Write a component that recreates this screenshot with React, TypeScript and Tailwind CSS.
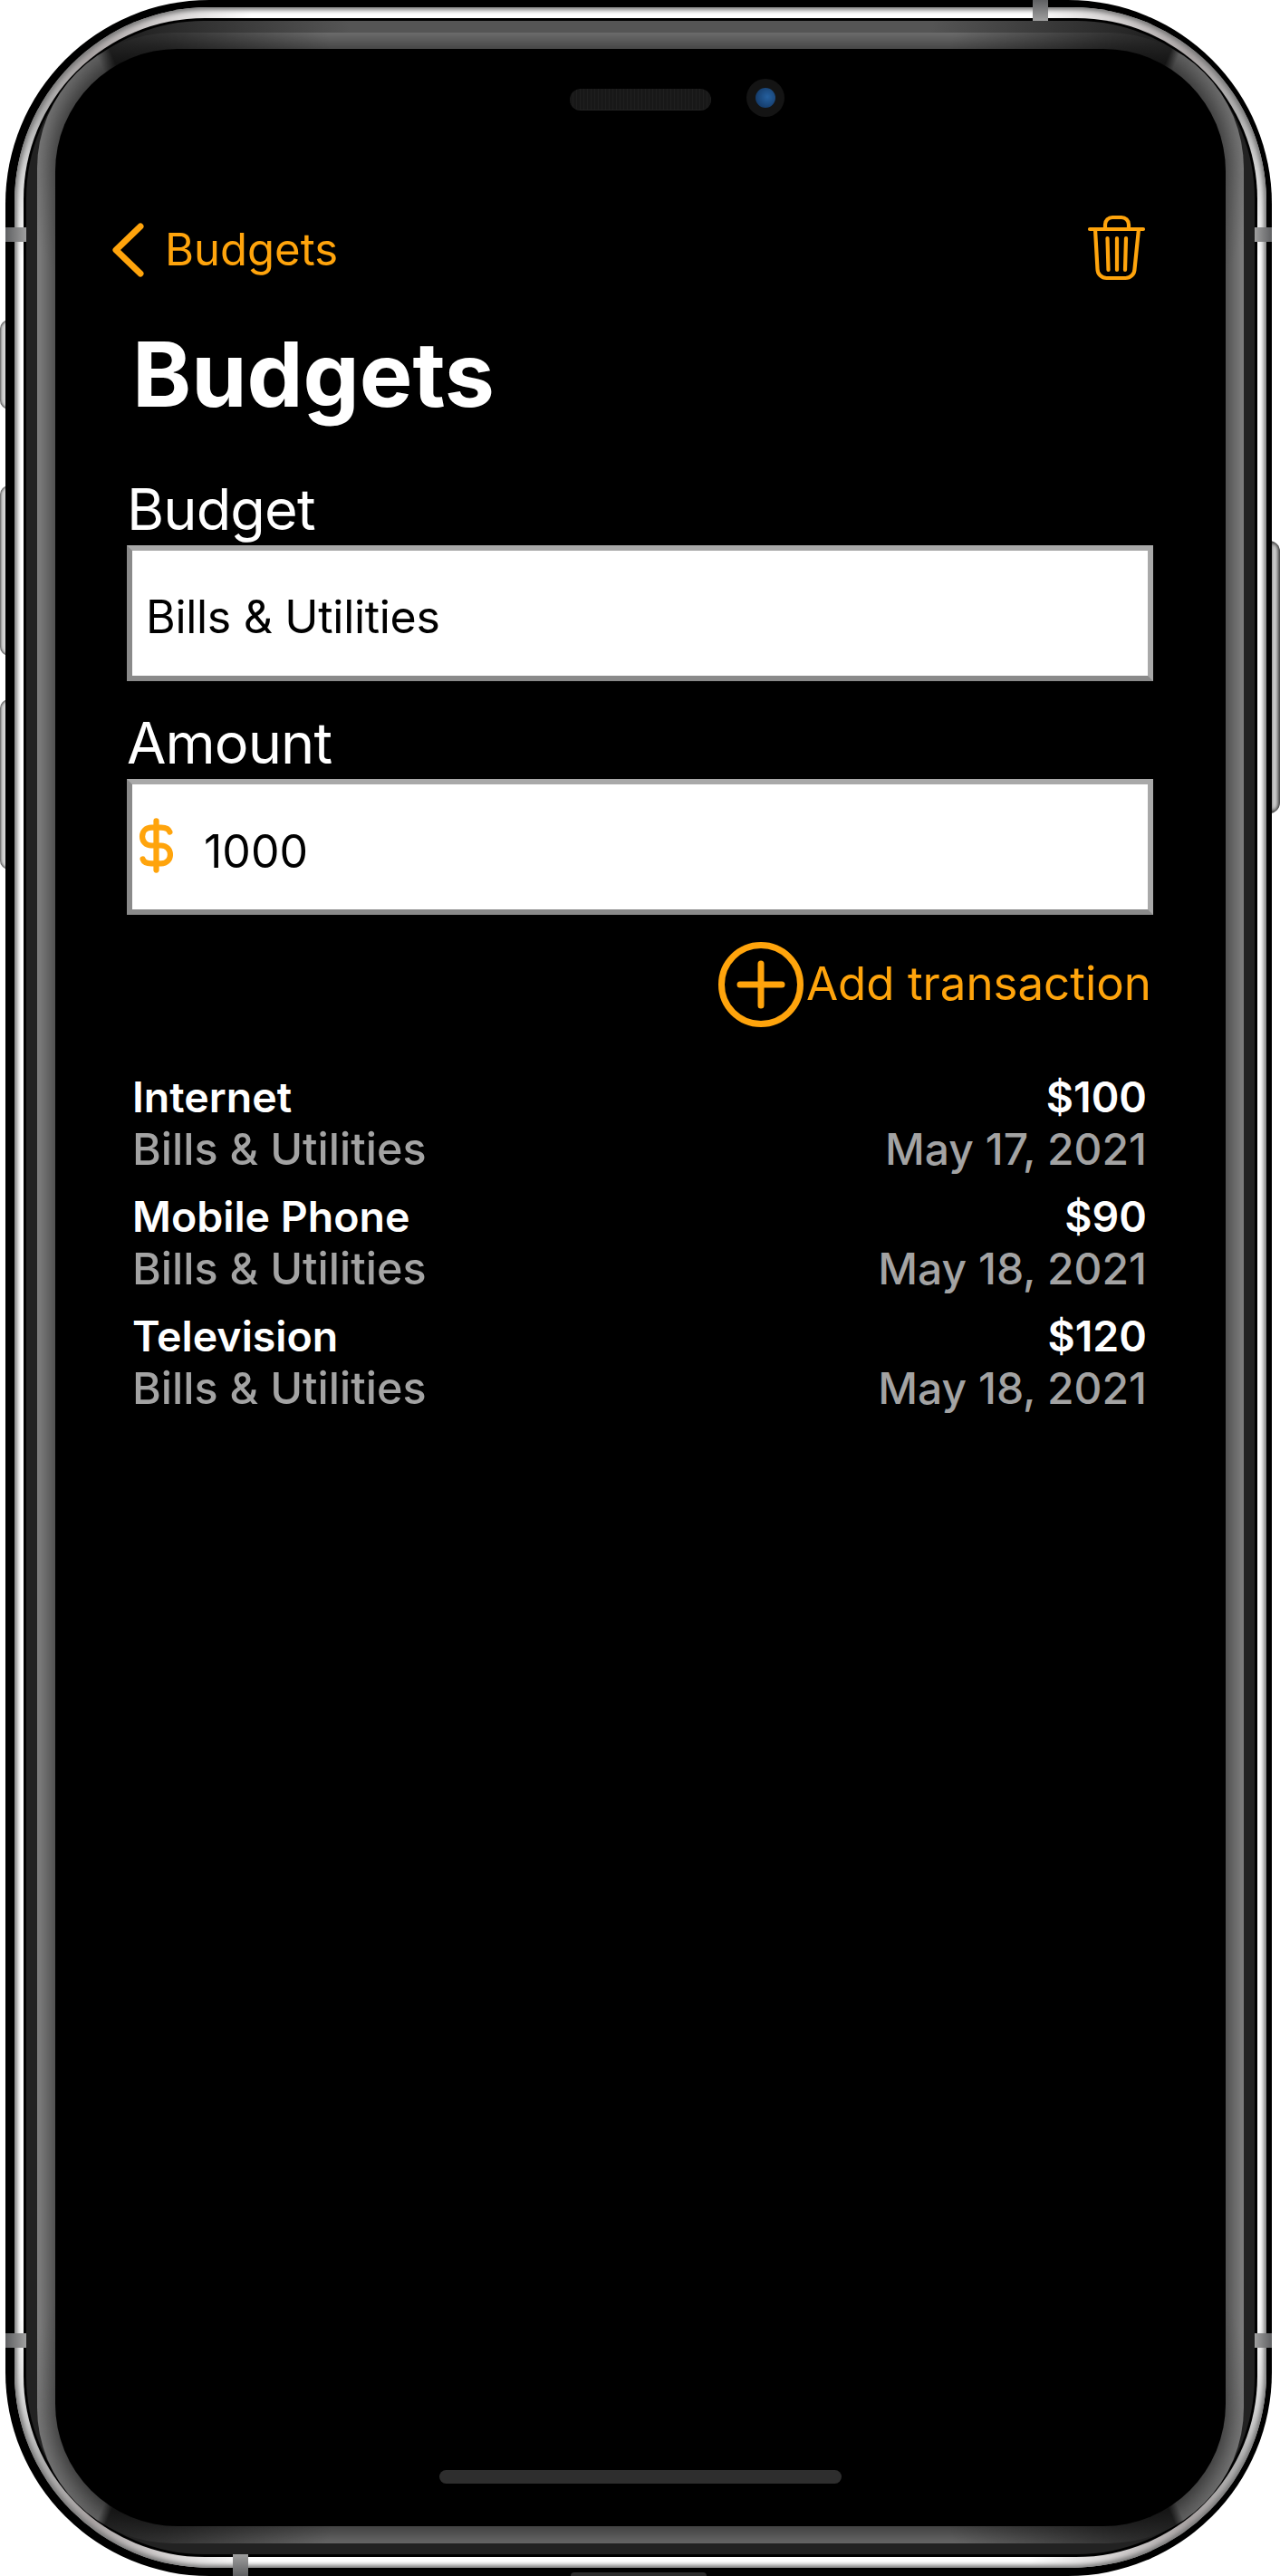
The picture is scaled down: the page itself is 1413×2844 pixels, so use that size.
const font = "font-['Inter','Liberation_Sans',sans-serif]";

function Chevron() {
  return (
    <svg width="38" height="60" viewBox="0 0 38 60" fill="none" stroke="#ffa40c" strokeWidth="7" strokeLinecap="round" strokeLinejoin="round">
      <path d="M33 4 L6 30 L33 56" />
    </svg>
  );
}

function Trash() {
  return (
    <svg width="65" height="74" viewBox="0 0 65 74" fill="none" stroke="#ffa40c" strokeWidth="4.2" strokeLinecap="round" strokeLinejoin="round">
      <path d="M3 16H62" />
      <path d="M20 16V11a8 8 0 0 1 8-8h10a8 8 0 0 1 8 8v5" />
      <path d="M9 16L11.5 60a10 10 0 0 0 10 10H42.5a10 10 0 0 0 10-10L57 16" />
      <path d="M22.5 26L23.5 61M33 26V61M43 26L42 61" />
    </svg>
  );
}

function Dollar() {
  return (
    <svg width="65" height="65" viewBox="0 0 24 24" fill="none" stroke="#ffa40c" strokeWidth="2.3" strokeLinecap="round" strokeLinejoin="round">
      <path d="M12 2V22" />
      <path d="M17.5 6.5C17 5 15.500 4.700 14 4.700H10C7.800 4.700 6.300 6.200 6.300 8.300C6.300 10.400 7.800 12 10 12H14C16.200 12 17.700 13.600 17.700 15.700C17.700 17.800 16.200 19.300 14 19.300H10C8.500 19.300 7 19 6.500 17.500" />
    </svg>
  );
}

function AddCircle() {
  return (
    <svg width="94" height="94" viewBox="0 0 94 94" fill="none" stroke="#ffa40c" strokeWidth="7" strokeLinecap="round">
      <circle cx="47" cy="47" r="43.500" />
      <path d="M24 47H70M47 24V70" />
    </svg>
  );
}

const rows = [
  { name: "Internet", amount: "$100", date: "May 17, 2021" },
  { name: "Mobile Phone", amount: "$90", date: "May 18, 2021" },
  { name: "Television", amount: "$120", date: "May 18, 2021" },
];

function Field({ label, children }: { label: string; children: React.ReactNode }) {
  return (
    <div className="flex flex-col gap-2">
      <div className="h-[64px] pl-[16px] text-[63px] leading-[64px] tracking-[-0.9px] text-white">{label}</div>
      <div className="ml-[16px] flex h-[150px] w-[1133px] items-center border-[6px] border-t-[#a9a9a9] border-r-[#a9a9a9] border-b-[#8a8a8a] border-l-[#8a8a8a] bg-white">
        {children}
      </div>
    </div>
  );
}

function Screen() {
  return (
    <div className={`relative h-full w-full rounded-[135px] bg-black pl-[63px] ${font} shadow-[0_0_24px_8px_rgba(0,0,0,0.55)]`}>
      <div className="absolute top-[44px] left-[568px] h-[24px] w-[156px] rounded-full border-b border-[#222] bg-[repeating-linear-gradient(90deg,#181818_0,#181818_3px,#1f1f1f_3px,#1f1f1f_4px)]" />
      <div className="absolute top-[33px] left-[763px] flex h-[42px] w-[42px] items-center justify-center rounded-full bg-[#141414]">
        <div className="h-[22px] w-[22px] rounded-full bg-[radial-gradient(circle_at_60%_45%,#25609f,#0f2f58)]" />
      </div>

      <div className="mt-0 w-[1139px] pt-[183px]">
        <div className="flex h-[74px] items-center justify-between">
          <div className="mt-[4px] -ml-[2px] flex items-center gap-[22px] text-[49px] leading-[60px] text-[#ffa40c]">
            <Chevron />
            <span>Budgets</span>
          </div>
          <div className="-mr-[2px]">
            <Trash />
          </div>
        </div>
        <div className="mt-[48px] h-[110px] pl-[22px] text-[98.500px] leading-[110px] font-bold text-white">Budgets</div>
        <div className="mt-[61px] flex flex-col gap-[36px]">
          <Field label="Budget">
            <span className="pt-[8px] pl-[15px] text-[50px] leading-[60px] tracking-[-0.3px] text-black">Bills &amp; Utilities</span>
          </Field>
          <Field label="Amount">
            <span className="-mt-[3px] -ml-[6px] h-[65px] w-[65px]">
              <Dollar />
            </span>
            <span className="pt-[10px] pl-[20px] text-[50px] leading-[60px] text-black">1000</span>
          </Field>
        </div>
        <div className="-mr-[8px] mt-[30px] flex h-[94px] items-center justify-end gap-[3px] text-[51px] leading-[70px] text-[#ffa40c]">
          <AddCircle />
          <span className="-mt-[2px]">Add transaction</span>
        </div>
        <div className="-mr-[3px] mt-[48px] flex flex-col gap-[16px] pl-[22px]">
          {rows.map((r) => (
            <div key={r.name} className="flex justify-between">
              <div>
                <div className="text-[46.500px] leading-[58px] font-semibold text-white">{r.name}</div>
                <div className="text-[48.500px] leading-[58px] font-medium text-[#a3a3a3]">Bills &amp; Utilities</div>
              </div>
              <div className="text-right">
                <div className="text-[46.500px] leading-[58px] font-semibold text-white">{r.amount}</div>
                <div className="text-[48px] leading-[58px] font-medium text-[#a3a3a3]">{r.date}</div>
              </div>
            </div>
          ))}
        </div>
      </div>

      <div className="absolute top-[2673px] left-[424px] h-[15px] w-[444px] rounded-full bg-[#2e2e2e]" />
    </div>
  );
}

export default function App() {
  return (
    <div className="relative h-[2844px] w-[1413px] overflow-hidden bg-white">
      {/* side buttons */}
      <div className="absolute top-[353px] left-0 h-[99px] w-[11px] rounded-l-[10px] bg-[#d4d4d4] shadow-[inset_0_0_3px_1px_#444]" />
      <div className="absolute top-[536px] left-0 h-[188px] w-[11px] rounded-l-[10px] bg-[#d4d4d4] shadow-[inset_0_0_3px_1px_#444]" />
      <div className="absolute top-[772px] left-0 h-[188px] w-[11px] rounded-l-[10px] bg-[#d4d4d4] shadow-[inset_0_0_3px_1px_#444]" />
      <div className="absolute top-[597px] right-0 h-[301px] w-[12px] rounded-r-[12px] bg-[#d2d2d2] shadow-[inset_0_0_4px_2px_#222]" />

      {/* body */}
      <div className="relative ml-[6px] h-[2844px] w-[1398px] rounded-[225px] bg-black pt-[8px] pr-[6px] pb-[9px] pl-[10px]">
        <div className="h-full w-full rounded-[215px] bg-[conic-gradient(#fff_0deg,#fff_17deg,#a9a3a3_24deg,#b0b0b0_27deg,#fff_31deg,#fff_149deg,#b0b0b0_153deg,#a9a3a3_156deg,#fff_163deg,#fff_197deg,#a9a3a3_204deg,#b0b0b0_207deg,#fff_211deg,#fff_329deg,#b0b0b0_333deg,#a9a3a3_336deg,#fff_343deg,#fff_360deg)] pt-[12px] pr-[10px] pb-[12px] pl-[10px] shadow-[inset_0_0_5px_3px_#777]">
          <div className="h-full w-full rounded-[200px] bg-black p-[3px]">
            <div className="h-full w-full rounded-[196px] bg-[conic-gradient(#555_0deg,#555_13deg,#222_22deg,#222_338deg,#555_347deg,#555_360deg)] pt-[13px] pr-[12px] pb-[12px] pl-[12px]">
              <div className="h-full w-full overflow-hidden rounded-[150px] bg-[conic-gradient(#787878_0deg,#787878_14deg,#222_23.2deg,#666_23.6deg,#8a8a8a_30deg,#8a8a8a_150deg,#666_156.2deg,#222_156.6deg,#707070_166deg,#707070_194deg,#222_203.4deg,#666_203.8deg,#8a8a8a_210deg,#8a8a8a_330deg,#666_336.2deg,#222_336.8deg,#787878_346deg,#787878_360deg)] pt-[18px] pr-[20px] pb-[19px] pl-[20px]">
                <Screen />
              </div>
            </div>
          </div>
        </div>
        {/* antenna bands */}
        <div className="absolute top-[251px] left-0 h-[16px] w-[23px] bg-gradient-to-r from-[#5f6062] to-[#a0a0a0]" />
        <div className="absolute top-[251px] right-0 h-[16px] w-[19px] bg-gradient-to-l from-[#5f6062] to-[#a0a0a0]" />
        <div className="absolute top-[2576px] left-0 h-[16px] w-[23px] bg-gradient-to-r from-[#5f6062] to-[#a0a0a0]" />
        <div className="absolute top-[2576px] right-0 h-[16px] w-[19px] bg-gradient-to-l from-[#5f6062] to-[#a0a0a0]" />
        <div className="absolute top-0 left-[1134px] h-[23px] w-[17px] bg-gradient-to-b from-[#5f6062] to-[#a0a0a0]" />
        <div className="absolute bottom-0 left-[251px] h-[24px] w-[17px] bg-gradient-to-t from-[#5f6062] to-[#a0a0a0]" />
        <div className="absolute bottom-0 left-[624px] h-[4px] w-[150px] rounded-t-[6px] bg-[#2c2c2c]" />
      </div>
    </div>
  );
}
